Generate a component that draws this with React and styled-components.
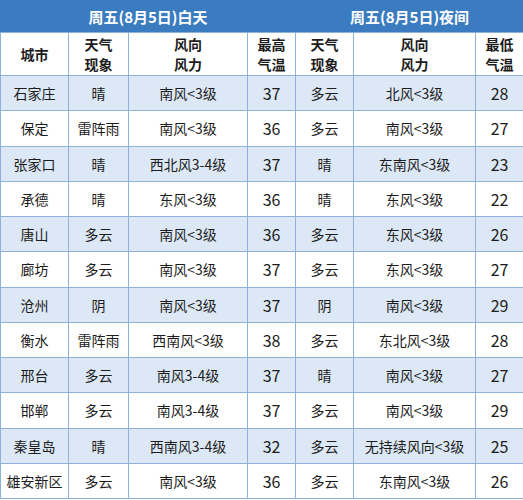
import React from 'react'
import styled, { createGlobalStyle } from 'styled-components'

const GlobalStyle = createGlobalStyle`
  html, body {
    margin: 0;
    padding: 0;
    background: #fff;
  }
  body {
    font-family: "Noto Sans CJK SC", "Liberation Sans", sans-serif;
  }
`

const Table = styled.table`
  width: 523px;
  height: 499px;
  border-collapse: collapse;
  table-layout: fixed;
  color: #1c1c1c;
  font-size: 14px;
`

const TitleCell = styled.th`
  height: 31px;
  padding: 0;
  background: #3b7cc0;
  color: #fff;
  font-size: 15px;
  font-weight: 700;
  text-align: center;
  border: 1px solid #3b7cc0;
  border-bottom-color: #8eb1d9;
`

const HeadCell = styled.th`
  height: 42px;
  padding: 0;
  background: #fff;
  font-size: 14px;
  font-weight: 700;
  line-height: 20px;
  text-align: center;
  border: 1px solid #8eb1d9;
`

const Row = styled.tr`
  background: ${p => (p.$shaded ? '#dce8f5' : '#fff')};
`

const Cell = styled.td`
  height: 34px;
  padding: 0;
  text-align: center;
  white-space: nowrap;
  border: 1px solid #8eb1d9;
  font-size: ${p => (p.$num ? '16px' : '14px')};
`

const widths = [68, 60, 119, 48, 58, 122, 48]

const rows = [
  ['石家庄', '晴', '南风<3级', 37, '多云', '北风<3级', 28],
  ['保定', '雷阵雨', '南风<3级', 36, '多云', '南风<3级', 27],
  ['张家口', '晴', '西北风3-4级', 37, '晴', '东南风<3级', 23],
  ['承德', '晴', '东风<3级', 36, '晴', '东风<3级', 22],
  ['唐山', '多云', '南风<3级', 36, '多云', '东风<3级', 26],
  ['廊坊', '多云', '南风<3级', 37, '多云', '东风<3级', 27],
  ['沧州', '阴', '南风<3级', 37, '阴', '南风<3级', 29],
  ['衡水', '雷阵雨', '西南风<3级', 38, '多云', '东北风<3级', 28],
  ['邢台', '多云', '南风3-4级', 37, '晴', '南风<3级', 27],
  ['邯郸', '多云', '南风3-4级', 37, '多云', '南风<3级', 29],
  ['秦皇岛', '晴', '西南风3-4级', 32, '多云', '无持续风向<3级', 25],
  ['雄安新区', '多云', '南风<3级', 36, '多云', '东南风<3级', 26],
]

export default function App() {
  return (
    <>
      <GlobalStyle />
      <Table>
        <colgroup>
          {widths.map((w, i) => (
            <col key={i} style={{ width: w }} />
          ))}
        </colgroup>
        <thead>
          <tr>
            <TitleCell colSpan={4}>周五(8月5日)白天</TitleCell>
            <TitleCell colSpan={3}>周五(8月5日)夜间</TitleCell>
          </tr>
          <tr>
            <HeadCell>城市</HeadCell>
            <HeadCell>天气<br />现象</HeadCell>
            <HeadCell>风向<br />风力</HeadCell>
            <HeadCell>最高<br />气温</HeadCell>
            <HeadCell>天气<br />现象</HeadCell>
            <HeadCell>风向<br />风力</HeadCell>
            <HeadCell>最低<br />气温</HeadCell>
          </tr>
        </thead>
        <tbody>
          {rows.map((r, i) => (
            <Row key={r[0]} $shaded={i % 2 === 0}>
              {r.map((v, j) => (
                <Cell key={j} $num={typeof v === 'number'}>{v}</Cell>
              ))}
            </Row>
          ))}
        </tbody>
      </Table>
    </>
  )
}
